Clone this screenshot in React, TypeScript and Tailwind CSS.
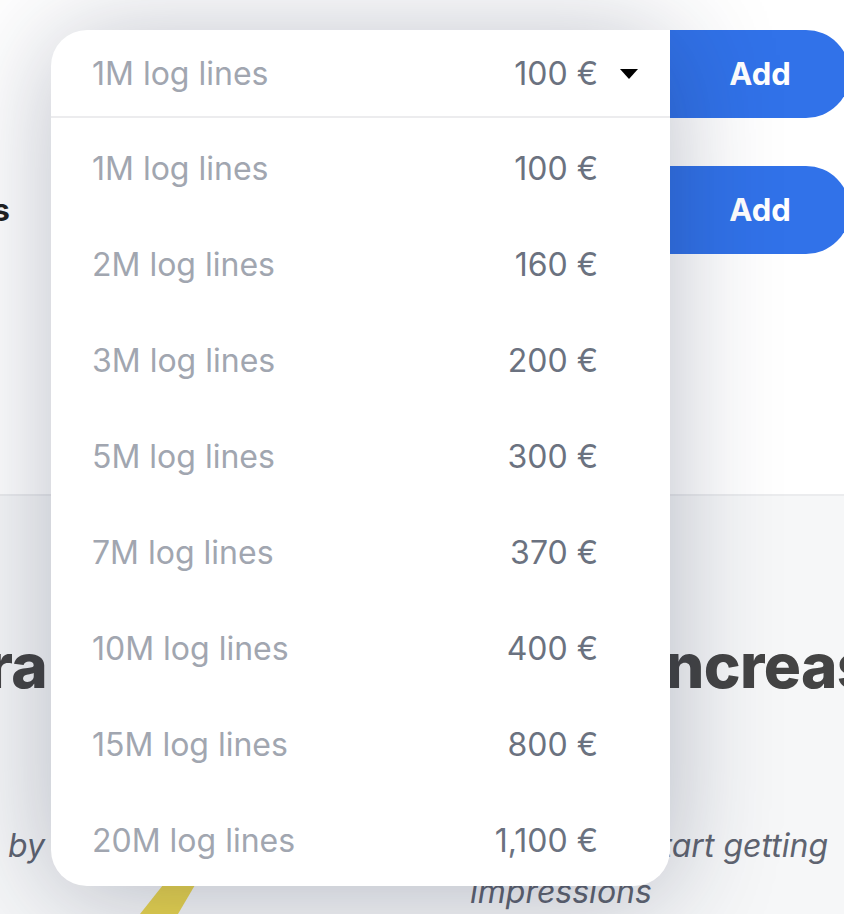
import React from 'react';

const OPTIONS = [
  { label: '1M log lines', price: '100 €' },
  { label: '2M log lines', price: '160 €' },
  { label: '3M log lines', price: '200 €' },
  { label: '5M log lines', price: '300 €' },
  { label: '7M log lines', price: '370 €' },
  { label: '10M log lines', price: '400 €' },
  { label: '15M log lines', price: '800 €' },
  { label: '20M log lines', price: '1,100 €' },
];

function PlanRow({ label, labelClass }: { label: string; labelClass: string }) {
  return (
    <div className="flex h-[88px] items-center">
      {/* Label column, mostly pushed off the left edge */}
      <div className="flex w-[51px] shrink-0 justify-end pr-[41px]">
        <span className={`whitespace-nowrap text-[31px] font-bold text-[#1f1f1f] ${labelClass}`}>{label}</span>
      </div>
      <div className="flex h-full w-[619px] shrink-0 items-center justify-between rounded-l-[36px] bg-white pl-[41px] pr-[32px]">
        <span className="text-[32px] text-[#a1a6b0]">1M log lines</span>
        <span className="text-[32px] text-[#6b7280]">100 €</span>
      </div>
      <button className="flex h-full w-[180px] shrink-0 items-center justify-center rounded-r-full bg-[#3172e9] text-[31px] font-bold text-white">
        Add
      </button>
    </div>
  );
}

export default function App() {
  return (
    <div className="relative h-[914px] w-full overflow-hidden bg-white font-['Inter',sans-serif]">
      {/* Plans */}
      <section className="flex h-[496px] flex-col gap-[48px] border-b-2 border-[#ebecee] pt-[30px]">
        <PlanRow label="Log lines" labelClass="mr-[30px]" />
        <PlanRow label="Retention days" labelClass="" />
      </section>

      {/* Lower section */}
      <section className="relative h-[418px] bg-[#f6f7f8] pt-[134px]">
        <h2 className="flex whitespace-nowrap text-[62px] font-extrabold leading-[72px] tracking-[-0.01em] text-[#444444]">
          <span className="flex w-[51px] shrink-0 justify-end pr-[4px]">
            <span>Get more tra</span>
          </span>
          <span className="w-[614px] shrink-0 text-center">ffic and i</span>
          <span>ncrease sales</span>
        </h2>
        <div className="mt-[121px] flex text-[32px] italic leading-[46px] text-[#5f6470]">
          <div className="flex w-[51px] shrink-0 justify-end gap-[14px] pr-[6px]">
            <span className="whitespace-nowrap">Get discovered</span>
            <span>by</span>
          </div>
          <div className="ml-[419px] flex w-[358px] flex-col">
            <span className="self-end whitespace-nowrap">Go live and start getting</span>
            <span className="whitespace-nowrap">impressions</span>
          </div>
        </div>
        <svg className="absolute left-[130px] top-[389px]" width="90" height="30" viewBox="0 0 90 30">
          <polygon points="33,0 65,0 48,29 10,29" fill="#e9d54e" />
        </svg>
      </section>

      {/* Open select menu */}
      <div className="absolute left-[51px] top-[30px] w-[619px] overflow-hidden rounded-[36px] rounded-tr-none bg-white shadow-[0_8px_110px_rgba(25,35,70,0.3)]">
        <div className="flex h-[88px] items-center justify-between border-b-2 border-[#ececee] pl-[41px] pr-[32px] pt-[2px]">
          <span className="text-[32px] text-[#a1a6b0]">1M log lines</span>
          <div className="flex items-center gap-[22px]">
            <span className="text-[32px] text-[#6b7280]">100 €</span>
            <svg width="18" height="10" viewBox="0 0 18 10">
              <polygon points="0,0 18,0 9,10" fill="#000" />
            </svg>
          </div>
        </div>
        {OPTIONS.map((o) => (
          <div key={o.label} className="flex h-[96px] items-center justify-between pl-[41px] pr-[72px] pt-[6px]">
            <span className="text-[32px] text-[#a1a6b0]">{o.label}</span>
            <span className="text-[32px] text-[#6b7280]">{o.price}</span>
          </div>
        ))}
      </div>
    </div>
  );
}
